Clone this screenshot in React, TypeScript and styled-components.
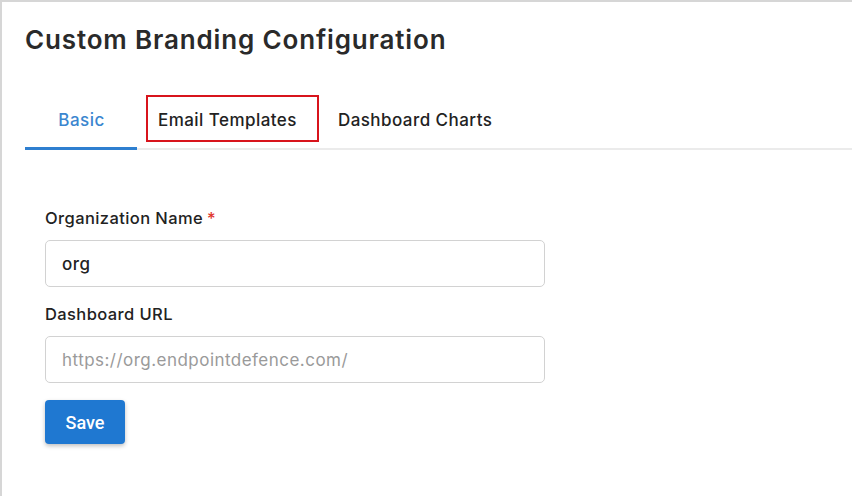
import React from "react";
import styled, { createGlobalStyle } from "styled-components";

const Global = createGlobalStyle`
  html, body { margin: 0; padding: 0; background: #ffffff; }
  body { font-family: "Inter", "Liberation Sans", sans-serif; color: #222; }
  * { box-sizing: border-box; }
`;

const Page = styled.div`
  width: 852px;
  height: 496px;
  border-top: 2px solid #d6d6d6;
  border-left: 2px solid #d6d6d6;
  padding: 22px 0 0 23px;
  display: flex;
  flex-direction: column;
  overflow: hidden;
`;

const Title = styled.h1`
  margin: 0;
  font-size: 26px;
  font-weight: 600;
  letter-spacing: 0.85px;
  color: #2a2a2a;
  line-height: 32px;
`;

const TabBar = styled.div`
  margin-top: 36px;
  display: flex;
  align-items: stretch;
  border-bottom: 2px solid #ebebeb;
  height: 58px;
`;

const Tab = styled.div<{ $active?: boolean }>`
  position: relative;
  display: flex;
  align-items: center;
  justify-content: center;
  padding: 0 20px 0 21px;
  min-width: ${(p) => (p.$active ? "112px" : "0")};
  font-size: 17px;
  font-weight: 500;
  letter-spacing: 0.45px;
  color: ${(p) => (p.$active ? "#3b86cf" : "#222")};
  margin-bottom: -2px;
  border-bottom: 3px solid ${(p) => (p.$active ? "#2e7fd0" : "transparent")};
`;

const Highlight = styled.span`
  position: absolute;
  left: 9px;
  right: -2px;
  top: 3px;
  bottom: 5px;
  border: 2px solid #d8141c;
  pointer-events: none;
`;

const Form = styled.div`
  display: flex;
  flex-direction: column;
  padding-left: 20px;
  margin-top: 58px;
  width: 520px;
`;

const Label = styled.label`
  font-size: 16.5px;
  font-weight: 500;
  letter-spacing: 0.4px;
  color: #222;
  line-height: 20px;
  margin-bottom: 12px;
`;

const Required = styled.span`
  color: #e0342c;
  margin-left: 4px;
`;

const Input = styled.input`
  width: 500px;
  height: 47px;
  border: 1.5px solid #d2d2d2;
  border-radius: 5px;
  padding: 0 16px;
  font-family: "Inter", "Liberation Sans", sans-serif;
  font-size: 17px;
  font-weight: 500;
  letter-spacing: 0.5px;
  color: #222;
  margin-bottom: 17px;
  outline: none;
  &::placeholder {
    color: #9a9a9a;
    font-weight: 400;
    letter-spacing: 0.47px;
  }
`;

const SaveButton = styled.button`
  align-self: flex-start;
  width: 80px;
  height: 44px;
  border: none;
  border-radius: 4px;
  background: #1f78d1;
  color: #fff;
  font-family: "Roboto", sans-serif;
  font-size: 18px;
  font-weight: 500;
  box-shadow: 0 2px 4px rgba(0, 0, 0, 0.25);
`;

export default function App() {
  return (
    <>
      <Global />
      <Page>
        <Title>Custom Branding Configuration</Title>
        <TabBar>
          <Tab $active>Basic</Tab>
          <Tab>
            Email Templates
            <Highlight />
          </Tab>
          <Tab>Dashboard Charts</Tab>
        </TabBar>
        <Form>
          <Label>
            Organization Name<Required>*</Required>
          </Label>
          <Input defaultValue="org" />
          <Label>Dashboard URL</Label>
          <Input placeholder="https://org.endpointdefence.com/" />
          <SaveButton>Save</SaveButton>
        </Form>
      </Page>
    </>
  );
}
